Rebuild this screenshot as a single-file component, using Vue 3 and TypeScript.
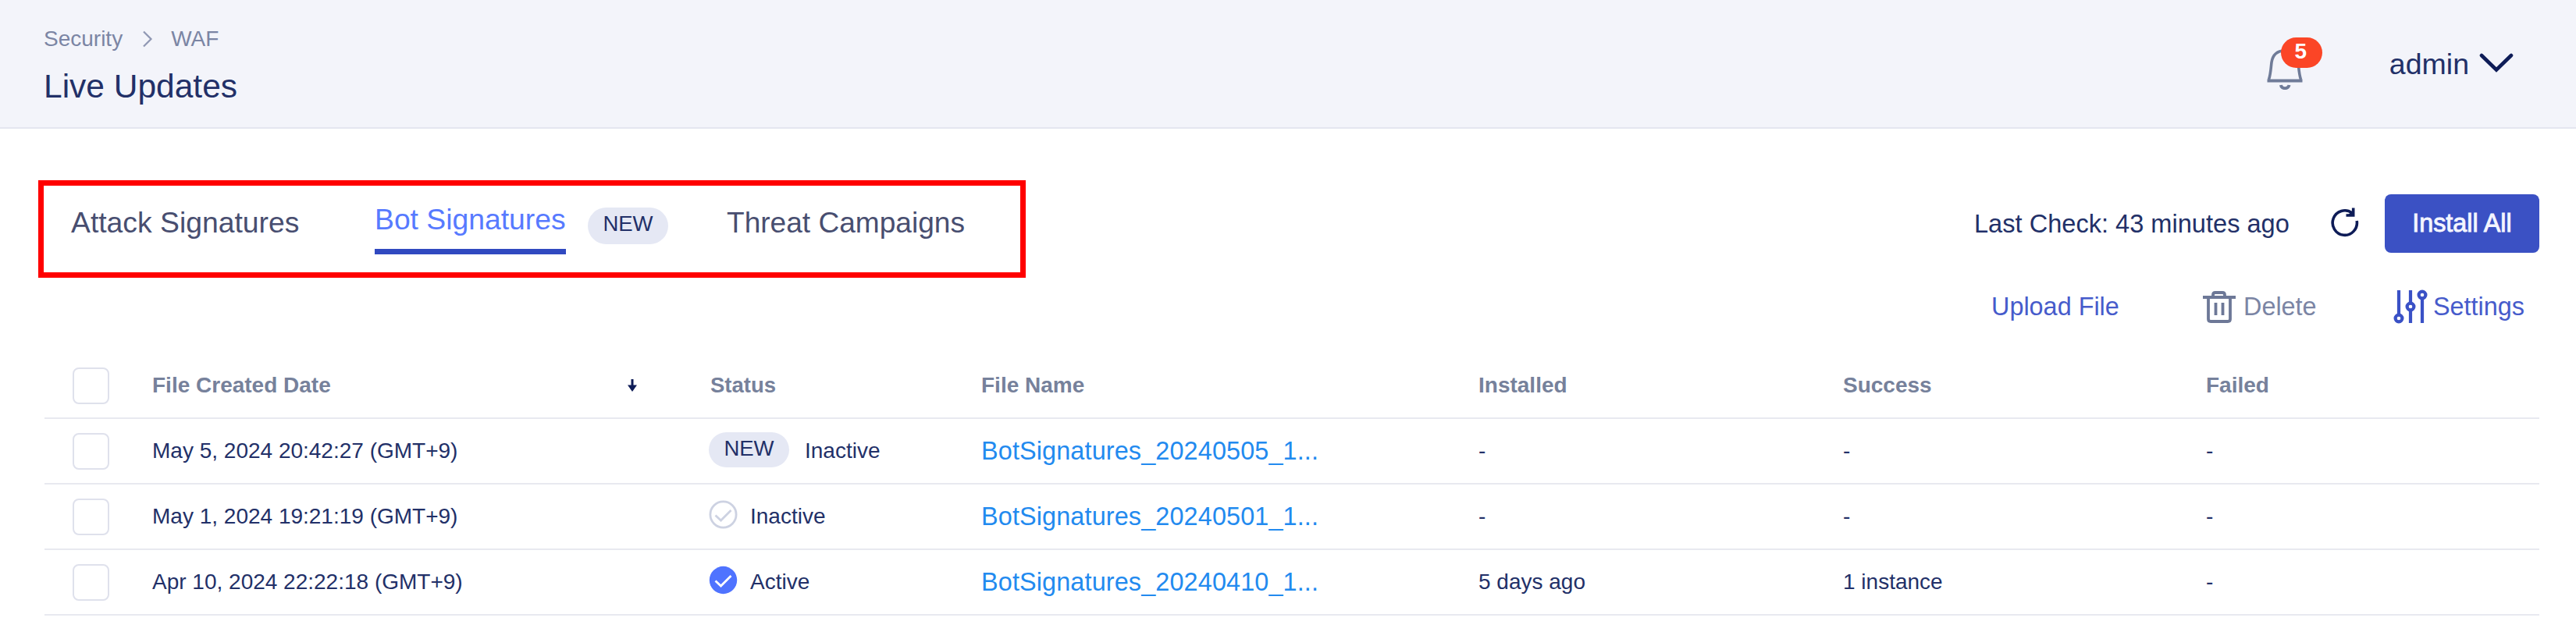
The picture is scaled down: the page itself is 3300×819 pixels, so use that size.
<script setup lang="ts">
interface UpdateRow {
  date: string
  isNew: boolean
  active: boolean
  file: string
  installed: string
  success: string
  failed: string
}

const rows: UpdateRow[] = [
  { date: 'May 5, 2024 20:42:27 (GMT+9)', isNew: true, active: false, file: 'BotSignatures_20240505_1...', installed: '-', success: '-', failed: '-' },
  { date: 'May 1, 2024 19:21:19 (GMT+9)', isNew: false, active: false, file: 'BotSignatures_20240501_1...', installed: '-', success: '-', failed: '-' },
  { date: 'Apr 10, 2024 22:22:18 (GMT+9)', isNew: false, active: true, file: 'BotSignatures_20240410_1...', installed: '5 days ago', success: '1 instance', failed: '-' },
]
</script>

<template>
  <div class="page">
    <header class="header">
      <div>
        <nav class="crumbs">
          <span>Security</span>
          <svg class="crumb-sep" width="14" height="22" viewBox="0 0 14 22"><path d="M2 1.5 L11.5 11 L2 20.5" fill="none" stroke="#8f97b3" stroke-width="2.2" /></svg>
          <span>WAF</span>
        </nav>
        <h1 class="title">Live Updates</h1>
      </div>
      <div class="account">
        <div class="bell">
          <svg width="46" height="54" viewBox="0 0 46 54" fill="none" stroke="#6f7b98" stroke-width="3.6">
            <path d="M2.5 41 C5 33 5 27 6 19 C7.500 9 13 4 23 4 C33 4 38.500 9 40 19 C41 27 41 33 43.500 41" />
            <path d="M0.500 42.500 H45.500" stroke-width="4" />
            <path d="M18 48 C18.500 53.500 27.500 53.500 28.500 48" stroke-width="4" />
          </svg>
          <span class="count">5</span>
        </div>
        <span class="user">admin</span>
        <svg class="caret" width="44" height="26" viewBox="0 0 44 26"><path d="M3 3 L22 21.500 L41 3" fill="none" stroke="#0e1c57" stroke-width="4.600" stroke-linecap="round" /></svg>
      </div>
    </header>

    <section class="toolbar">
      <div class="tabs">
        <span class="tab">Attack Signatures</span>
        <span class="tab selected">Bot Signatures</span>
        <span class="pill tab-pill">NEW</span>
        <span class="tab threat">Threat Campaigns</span>
      </div>
      <div class="check">
        <span class="last">Last Check: 43 minutes ago</span>
        <svg class="refresh" width="36" height="38" viewBox="0 0 36 38">
          <path d="M27 6.800 A15.600 15.800 0 1 0 33.200 17" fill="none" stroke="#0e1c57" stroke-width="3.600" />
          <path d="M28.700 0.500 V10 H19.500" fill="none" stroke="#0e1c57" stroke-width="3.600" />
          <path d="M28 4 V10 H21 Z" fill="#0e1c57" />
        </svg>
        <button class="install">Install All</button>
      </div>
    </section>

    <section class="actions">
      <span>Upload File</span>
      <svg width="43" height="44" viewBox="0 0 43 44" fill="none" stroke="#6d7897" stroke-width="3.800">
        <path d="M1 10 H43" />
        <path d="M14 9 V7 Q14 4 17 4 H26 Q29 4 29 7 V9" />
        <path d="M8 10 V38 Q8 41 11 41 H33 Q36 41 36 38 V10" />
        <path d="M17.500 17 V33 M26.500 17 V33" stroke-width="3.800" />
      </svg>
      <span class="delete">Delete</span>
      <svg width="44" height="44" viewBox="0 0 44 44" fill="none" stroke="#3a51c6" stroke-width="4.200">
        <path d="M7 1 V31 M22 1 V17 M22 27 V43 M37 12 V43" />
        <circle cx="7" cy="37" r="4.400" />
        <circle cx="22" cy="22" r="4.400" />
        <circle cx="37" cy="7" r="4.400" />
      </svg>
      <span>Settings</span>
    </section>

    <section class="table">
      <div class="row head">
        <div><span class="box"></span></div>
        <div class="sorted">
          <span>File Created Date</span>
          <svg width="12" height="16" viewBox="0 0 12 16"><path d="M6 0 V12" stroke="#0e1c57" stroke-width="3" /><path d="M0 7.500 H12 L6 16 Z" fill="#0e1c57" /></svg>
        </div>
        <div class="status-head">Status</div>
        <div>File Name</div>
        <div>Installed</div>
        <div>Success</div>
        <div>Failed</div>
      </div>
      <div v-for="row in rows" :key="row.date" class="row">
        <div><span class="box"></span></div>
        <div>{{ row.date }}</div>
        <div>
          <span v-if="row.isNew" class="pill row-pill">NEW</span>
          <svg v-else class="mark" width="37" height="37" viewBox="0 0 37 37">
            <circle v-if="row.active" cx="18.500" cy="18.500" r="17.700" fill="#4f73ff" />
            <circle v-else cx="18.500" cy="18.500" r="16.600" fill="none" stroke="#cdd2e2" stroke-width="2.800" />
            <path d="M8.500 19.500 L15.500 26 L28.500 13" fill="none" :stroke="row.active ? '#ffffff' : '#cdd2e2'" stroke-width="2.800" />
          </svg>
          <span>{{ row.active ? 'Active' : 'Inactive' }}</span>
        </div>
        <div class="link">{{ row.file }}</div>
        <div>{{ row.installed }}</div>
        <div>{{ row.success }}</div>
        <div>{{ row.failed }}</div>
      </div>
    </section>
  </div>
</template>

<style>
body {
  margin: 0;
  background: #fff;
}
</style>

<style scoped>
.page {
  width: 3300px;
  height: 819px;
  overflow: hidden;
  background: #fff;
  font-family: 'Liberation Sans', Arial, sans-serif;
  color: #223068;
  white-space: nowrap;
  box-sizing: border-box;
}
.header {
  height: 165px;
  box-sizing: border-box;
  padding: 32px 80px 0 56px;
  background: #f3f4fa;
  border-bottom: 2px solid #e4e6f0;
  display: flex;
  justify-content: space-between;
}
.crumbs {
  display: flex;
  align-items: center;
  height: 36px;
  font-size: 28px;
  color: #7b85a4;
}
.crumb-sep {
  margin: 0 23px 0 25px;
}
.title {
  margin: 18px 0 0;
  font-size: 42.500px;
  font-weight: 400;
  line-height: 50px;
}
.account {
  display: flex;
  align-items: flex-start;
}
.bell {
  position: relative;
  width: 46px;
  height: 54px;
  margin-top: 29px;
}
.count {
  position: absolute;
  left: 18px;
  top: -13px;
  width: 53px;
  height: 39px;
  border-radius: 20px;
  background: #fb4526;
  color: #fff;
  font-size: 28px;
  font-weight: 700;
  line-height: 36px;
  text-align: center;
  text-indent: -2px;
}
.user {
  margin-left: 111px;
  margin-top: 28px;
  font-size: 37.500px;
  line-height: 44px;
}
.caret {
  margin: 67px 0 0 13px;
  margin-top: 36px;
}
.toolbar {
  display: flex;
  justify-content: space-between;
  align-items: flex-start;
  padding: 66px 47px 0 49px;
}
.tabs {
  box-sizing: border-box;
  width: 1265px;
  height: 125px;
  border: 7px solid #f00;
  border-width: 7px;
  padding-left: 35px;
  display: grid;
  grid-template-columns: 389px 273px 178px auto;
  align-items: start;
}
.tab {
  justify-self: start;
  margin-top: 25px;
  font-size: 37.300px;
  line-height: 44px;
  color: #484e70;
}
.tab.selected {
  margin-top: 21px;
  padding-bottom: 16px;
  border-bottom: 7px solid #3049c0;
  color: #577aff;
}
.tab.threat {
  font-size: 37.100px;
}
.pill {
  box-sizing: border-box;
  width: 103px;
  border-radius: 24px;
  background: #e5e8f4;
  color: #223068;
  font-size: 27.500px;
  text-align: center;
}
.tab-pill {
  height: 47px;
  line-height: 42px;
  margin-top: 28px;
}
.check {
  display: grid;
  grid-template-columns: 457px 69px 198px;
  align-items: center;
  height: 75px;
  margin-top: 18px;
}
.last {
  font-size: 32.600px;
}
.refresh {
  margin-top: -4px;
}
.install {
  height: 75px;
  border: 0;
  border-radius: 8px;
  background: #3b51c4;
  color: #f4f5ff;
  font: 400 32.300px 'Liberation Sans', Arial, sans-serif;
  -webkit-text-stroke: 0.9px #f4f5ff;
}
.actions {
  display: grid;
  grid-template-columns: 270px 53px 192px 51px auto;
  align-items: center;
  height: 44px;
  margin: 15px 0 0 2551px;
  font-size: 32.400px;
  color: #465bcb;
}
.delete {
  color: #7b85a4;
}
.table {
  margin: 38px 47px 0 57px;
}
.row {
  display: grid;
  grid-template-columns: 138px 713px 349px 637px 467px 465px auto;
  height: 84px;
  box-sizing: border-box;
  border-bottom: 2px solid #e8e9f0;
  font-size: 28px;
}
.row > div {
  display: flex;
  align-items: center;
}
.head {
  font-weight: 700;
  color: #76819b;
}
.head .sorted {
  justify-content: space-between;
  padding-right: 92px;
}
.head .status-head {
  padding-left: 2px;
  font-size: 27.500px;
}
.box {
  box-sizing: border-box;
  width: 47px;
  height: 47px;
  margin-left: 36px;
  border: 2px solid #dfe1ec;
  border-radius: 8px;
}
.row-pill {
  height: 45px;
  line-height: 41px;
  margin: -3px 20px 0 0;
}
.mark {
  margin: -5px 16px 0 0;
}
.link {
  font-size: 32.400px;
  letter-spacing: 0.13px;
  color: #228aef;
}
</style>
